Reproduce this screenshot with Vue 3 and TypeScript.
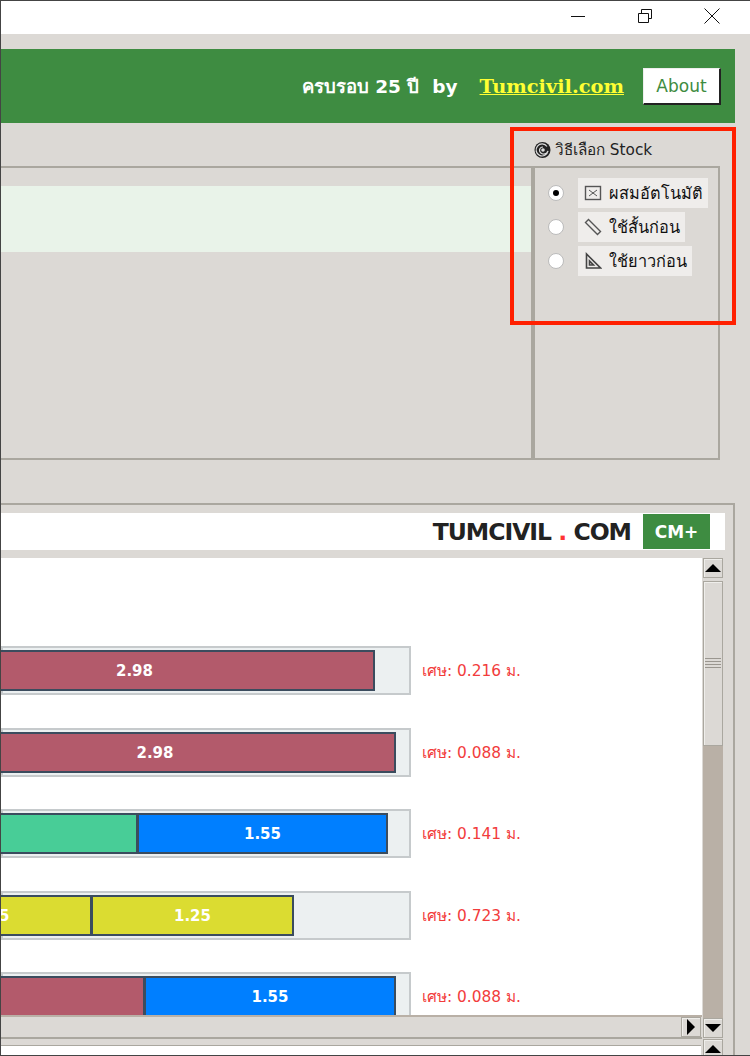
<script setup lang="ts">
interface Seg { w: number; color: string; label: string }
interface Row { leftover: string; gap: number; segs: Seg[] }
const RED = '#b35a6b'
const BLUE = '#007fff'
const GREEN = '#48cd97'
const YEL = '#dbdc31'
const rows: Row[] = [
  { leftover: '0.216', gap: 34, segs: [{ w: 480, color: RED, label: '2.98' }] },
  { leftover: '0.088', gap: 13, segs: [{ w: 481, color: RED, label: '2.98' }] },
  { leftover: '0.141', gap: 21, segs: [{ w: 300, color: GREEN, label: '' }, { w: 250, color: BLUE, label: '1.55' }] },
  { leftover: '0.723', gap: 115, segs: [{ w: 201, color: YEL, label: '1.25' }, { w: 202, color: YEL, label: '1.25' }] },
  { leftover: '0.088', gap: 13, segs: [{ w: 300, color: RED, label: '' }, { w: 251, color: BLUE, label: '1.55' }] }
]
const options = [
  { label: 'ผสมอัตโนมัติ', icon: 'mix', checked: true },
  { label: 'ใช้สั้นก่อน', icon: 'ruler', checked: false },
  { label: 'ใช้ยาวก่อน', icon: 'square', checked: false }
]
</script>

<template>
  <div class="win">
    <div class="title">
      <svg class="cap" width="16" height="16" viewBox="0 0 16 16"><path d="M1 8.500h14" stroke="#111" fill="none" /></svg>
      <svg class="cap" width="16" height="16" viewBox="0 0 16 16"><path d="M1.500 5.500h10v9h-10zM4.500 5V1.500h10v9H12" stroke="#111" fill="none" /></svg>
      <svg class="cap" width="16" height="16" viewBox="0 0 16 16"><path d="M.5.5l15 15M15.500.5l-15 15" stroke="#111" fill="none" /></svg>
    </div>

    <div class="banner">
      <span class="anniv">ครบรอบ 25 ปี&nbsp; by</span>
      <a class="brand">Tumcivil.com</a>
      <button class="about">About</button>
    </div>

    <div class="config">
      <div class="stock-left"><div class="band"></div></div>
      <div class="stock-col">
        <div class="legend">
          <svg width="17" height="17" viewBox="0 0 17 17"><circle cx="8.500" cy="9" r="8" fill="#222" /><path d="M13 5.500A6 6 0 1 0 14 10a4.500 4.500 0 0 1-4 3 4 4 0 0 1-4.500-4 3.500 3.500 0 0 1 3.500-3" fill="none" stroke="#ddd" stroke-width="1.200" /><circle cx="9" cy="9" r="1.800" fill="#ddd" /></svg>
          <span>วิธีเลือก Stock</span>
        </div>
        <div class="opts">
          <div v-for="o in options" :key="o.label" class="opt">
            <span class="radio" :class="{ on: o.checked }"></span>
            <span class="opt-label">
              <svg v-if="o.icon === 'mix'" width="18" height="18" viewBox="0 0 18 18"><rect x="1.500" y="2.500" width="15" height="13" fill="none" stroke="#555" stroke-width="1.400" /><path d="M5 6l8 6M5 12l8-6" stroke="#555" fill="none" /></svg>
              <svg v-else-if="o.icon === 'ruler'" width="18" height="18" viewBox="0 0 18 18"><path d="M1.500 4.500l3-3 12 12-3 3z" fill="none" stroke="#555" stroke-width="1.400" /></svg>
              <svg v-else width="18" height="18" viewBox="0 0 18 18"><path d="M2.500 2v14h14zM5.500 9v4h4z" fill="none" stroke="#444" stroke-width="1.600" /></svg>
              <span>{{ o.label }}</span>
            </span>
          </div>
        </div>
      </div>
    </div>

    <div class="result">
      <div class="strip">
        <span class="logo">TUMCIVIL <b>.</b> COM</span>
        <button class="cm">CM+</button>
      </div>
      <div class="view">
        <div class="vp">
          <div class="chart">
            <div v-for="(r, i) in rows" :key="i" class="row">
              <div class="track" :style="{ paddingRight: r.gap + 'px' }">
                <div v-for="(s, j) in r.segs" :key="j" class="seg" :style="{ width: s.w + 'px', background: s.color }">{{ s.label }}</div>
              </div>
              <span class="left">เศษ: {{ r.leftover }} ม.</span>
            </div>
          </div>
          <div class="hbar">
            <div class="hthumb"></div>
            <div class="sbtn hbtn"><i class="tri right"></i></div>
          </div>
        </div>
        <div class="vbar">
          <div class="sbtn"><i class="tri up"></i></div>
          <div class="vthumb"><span class="grip"></span></div>
          <div class="vtrack"></div>
          <div class="sbtn"><i class="tri down"></i></div>
        </div>
      </div>
      <div class="bottom">
        <div class="bleft">
          <div class="bline"></div>
          <div class="bwhite"></div>
        </div>
        <div class="sbtn"><i class="tri up"></i></div>
      </div>
    </div>

    <div class="mark"></div>
  </div>
</template>

<style>
html, body { margin: 0; background: #dcd9d5; }
</style>

<style scoped>
.win {
  position: relative;
  width: 750px;
  height: 1056px;
  box-sizing: border-box;
  overflow: hidden;
  background: #dcd9d5;
  border-top: 1px solid #444;
  border-left: 1px solid #444;
  border-bottom: 1px solid #444;
  font-family: "DejaVu Sans", "Noto Sans", sans-serif;
  display: flex;
  flex-direction: column;
}
.title {
  height: 33px;
  background: #fff;
  display: flex;
  justify-content: flex-end;
  align-items: center;
  gap: 51px;
  padding-right: 30px;
  flex: none;
}
.cap { flex: none; margin-top: -4px; }
.banner {
  margin: 15px 15px 0 0;
  height: 74px;
  background: #3e8c41;
  display: flex;
  align-items: center;
  justify-content: flex-end;
  padding-right: 14px;
  flex: none;
}
.anniv { color: #fff; font-weight: 700; font-size: 18.500px; margin-right: 22px; }
.brand {
  color: #ffff33;
  font-family: "DejaVu Serif", serif;
  font-weight: 700;
  font-size: 19.400px;
  text-decoration: underline;
  margin-right: 19px;
}
.about {
  width: 78px;
  height: 37px;
  padding: 0;
  background: #fff;
  color: #3e8c41;
  border: 1px solid #eee;
  border-right: 2px solid #222;
  border-bottom: 2px solid #222;
  font: 17px "DejaVu Sans", sans-serif;
}
.config {
  display: flex;
  height: 337px;
  flex: none;
  padding-right: 30px;
}
.stock-left {
  flex: 1;
  margin-top: 43px;
  border: 2px solid #aaa79f;
  border-left: 0;
  padding-top: 18px;
  box-sizing: border-box;
}
.band { height: 66px; background: #e9f3e9; }
.stock-col { width: 187px; display: flex; flex-direction: column; }
.legend {
  height: 43px;
  box-sizing: border-box;
  padding: 9px 0 0 1px;
  display: flex;
  align-items: center;
  gap: 4px;
  font-size: 15.300px;
  color: #222;
}
.opts {
  flex: 1;
  border: 2px solid #aaa79f;
  padding: 10px 0 0 13px;
  display: flex;
  flex-direction: column;
  gap: 4px;
}
.opt { display: flex; align-items: center; gap: 14px; height: 30px; }
.radio {
  width: 14px;
  height: 14px;
  border-radius: 50%;
  background: #fff;
  border: 1px solid #bbb;
  flex: none;
  display: flex;
  align-items: center;
  justify-content: center;
}
.radio.on::after { content: ""; width: 6px; height: 6px; border-radius: 50%; background: #000; }
.opt-label {
  background: #efedeb;
  display: flex;
  align-items: center;
  gap: 7px;
  height: 30px;
  padding: 0 5px 0 6px;
  font-size: 16.300px;
  color: #111;
}
.result {
  margin: 43px 15px 0 0;
  border-top: 2px solid #aaa79f;
  border-right: 2px solid #aaa79f;
  flex: 1;
  min-height: 0;
  display: flex;
  flex-direction: column;
  padding: 8px 8px 0 0;
}
.strip {
  height: 37px;
  background: #fff;
  display: flex;
  align-items: center;
  justify-content: flex-end;
  padding-right: 15px;
  flex: none;
}
.logo { font-weight: 700; font-size: 23.500px; color: #222; margin-right: 12px; letter-spacing: -1px; }
.logo b { color: #f33; }
.cm {
  width: 67px;
  height: 35px;
  border: 0;
  background: #3e8c41;
  color: #fff;
  font: 700 17px "DejaVu Sans", sans-serif;
  padding: 0;
}
.view { display: flex; margin-top: 8px; flex: 1; min-height: 0; }
.vp { flex: 1; min-width: 0; display: flex; flex-direction: column; }
.chart {
  flex: 1;
  min-height: 0;
  background: #fff;
  overflow: hidden;
  padding-top: 88px;
  display: flex;
  flex-direction: column;
  gap: 32.500px;
}
.row { display: flex; align-items: center; flex: none; height: 49px; }
.track {
  width: 410px;
  height: 49px;
  flex: none;
  box-sizing: border-box;
  background: #ecf0f1;
  border: 2px solid #c6cacc;
  padding: 2px 0;
  display: flex;
  justify-content: flex-end;
}
.seg {
  flex: none;
  box-sizing: border-box;
  height: 100%;
  border: 2px solid #3b4c5e;
  border-left-width: 1px;
  padding-top: 1px;
  color: #fff;
  font-weight: 700;
  font-size: 15px;
  display: flex;
  align-items: center;
  justify-content: center;
}
.left { margin-left: 11px; color: #f23c3c; font-size: 15.400px; white-space: nowrap; }
.hbar {
  height: 20px;
  flex: none;
  display: flex;
  justify-content: flex-end;
  border-top: 2px solid #b9b0a6;
  border-bottom: 2px solid #aaa79f;
  background: #dcd9d5;
}
.hthumb { flex: 1; }
.hbtn { margin-right: 1px; }
.sbtn {
  box-sizing: border-box;
  width: 20px;
  height: 20px;
  flex: none;
  background: #dcd9d5;
  border: 1px solid #aaa79f;
  box-shadow: inset 1px 1px 0 #efeeeb;
  display: flex;
  align-items: center;
  justify-content: center;
}
.tri { width: 0; height: 0; display: block; border-style: solid; border-color: transparent; }
.tri.up { border-width: 0 8px 8px; border-bottom-color: #000; }
.tri.down { border-width: 8px 8px 0; border-top-color: #000; }
.tri.right { border-width: 8px 0 8px 8px; border-left-color: #000; }
.vbar { width: 20px; flex: none; display: flex; flex-direction: column; margin: 0 2px 0 1px; padding-bottom: 1px; }
.vthumb {
  height: 165px;
  margin-top: 3px;
  background: #dcd9d5;
  border: 1px solid #aaa79f;
  box-shadow: inset 1px 1px 0 #efeeeb;
  box-sizing: border-box;
  flex: none;
  display: flex;
  align-items: center;
  justify-content: center;
}
.grip { width: 16px; height: 12px; background: repeating-linear-gradient(#9a968f 0 1px, #dcd9d5 1px 3px); }
.vtrack { flex: 1; background: #b9b0a6; }
.bottom { height: 16px; display: flex; flex: none; padding-right: 2px; }
.bleft { flex: 1; display: flex; flex-direction: column; margin-right: 2px; }
.bline { height: 6px; flex: none; border-bottom: 1px solid #aaa79f; }
.bwhite { flex: 1; background: #fff; }
.mark {
  position: absolute;
  left: 509px;
  top: 126px;
  width: 226px;
  height: 198px;
  box-sizing: border-box;
  border: 4px solid #ff2000;
  pointer-events: none;
}
</style>
